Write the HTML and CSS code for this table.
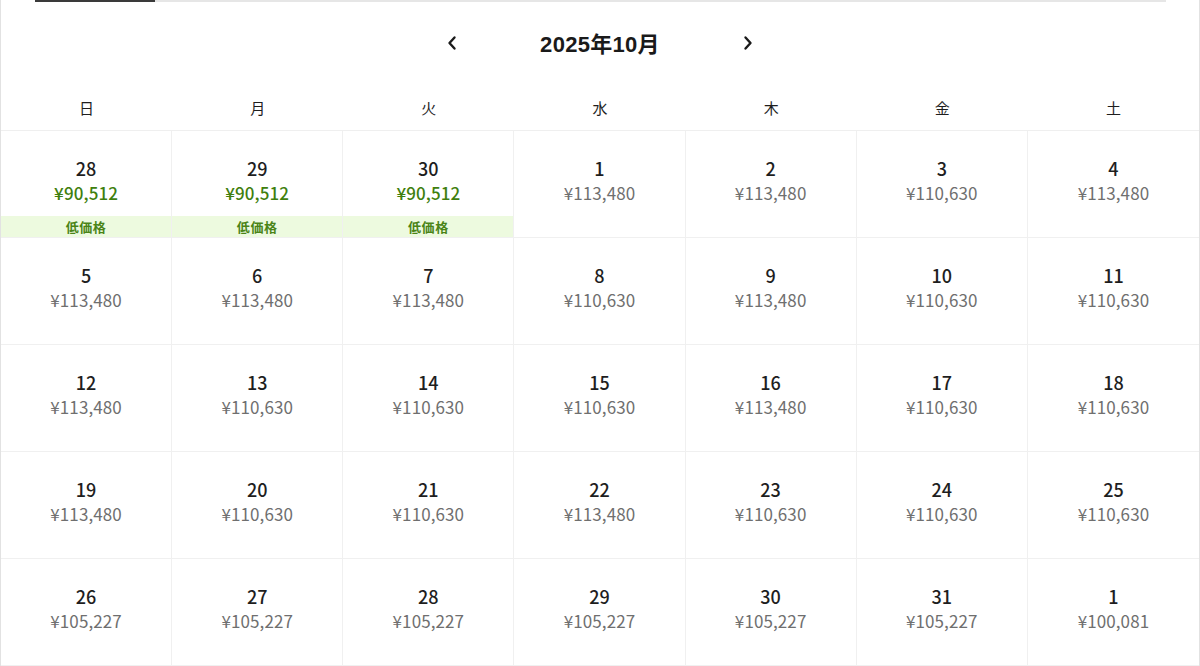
FILE: index.html
```html
<!DOCTYPE html>
<html lang="ja">
<head>
<meta charset="utf-8">
<link rel="stylesheet" href="styles.css">
</head>
<body>
<div class="frame">
  <div class="tabs"><div class="tab-active"></div></div>
  <div class="nav">
    <button class="arrow" aria-label="prev"><svg width="12" height="16" viewBox="0 0 12 16"><path d="M8.5 2.5 L3.5 8 L8.5 13.5" fill="none" stroke="#1a1a1a" stroke-width="2.4" stroke-linecap="round" stroke-linejoin="round"/></svg></button>
    <div class="title">2025年10月</div>
    <button class="arrow" aria-label="next"><svg width="12" height="16" viewBox="0 0 12 16"><path d="M3.5 2.5 L8.5 8 L3.5 13.5" fill="none" stroke="#1a1a1a" stroke-width="2.4" stroke-linecap="round" stroke-linejoin="round"/></svg></button>
  </div>
  <div class="weekdays">
    <div>日</div><div>月</div><div>火</div><div>水</div><div>木</div><div>金</div><div>土</div>
  </div>
  <div class="grid">
    <div class="cell low"><div class="day">28</div><div class="price">¥90,512</div><div class="badge">低価格</div></div>
    <div class="cell low"><div class="day">29</div><div class="price">¥90,512</div><div class="badge">低価格</div></div>
    <div class="cell low"><div class="day">30</div><div class="price">¥90,512</div><div class="badge">低価格</div></div>
    <div class="cell"><div class="day">1</div><div class="price">¥113,480</div></div>
    <div class="cell"><div class="day">2</div><div class="price">¥113,480</div></div>
    <div class="cell"><div class="day">3</div><div class="price">¥110,630</div></div>
    <div class="cell"><div class="day">4</div><div class="price">¥113,480</div></div>

    <div class="cell"><div class="day">5</div><div class="price">¥113,480</div></div>
    <div class="cell"><div class="day">6</div><div class="price">¥113,480</div></div>
    <div class="cell"><div class="day">7</div><div class="price">¥113,480</div></div>
    <div class="cell"><div class="day">8</div><div class="price">¥110,630</div></div>
    <div class="cell"><div class="day">9</div><div class="price">¥113,480</div></div>
    <div class="cell"><div class="day">10</div><div class="price">¥110,630</div></div>
    <div class="cell"><div class="day">11</div><div class="price">¥110,630</div></div>

    <div class="cell"><div class="day">12</div><div class="price">¥113,480</div></div>
    <div class="cell"><div class="day">13</div><div class="price">¥110,630</div></div>
    <div class="cell"><div class="day">14</div><div class="price">¥110,630</div></div>
    <div class="cell"><div class="day">15</div><div class="price">¥110,630</div></div>
    <div class="cell"><div class="day">16</div><div class="price">¥113,480</div></div>
    <div class="cell"><div class="day">17</div><div class="price">¥110,630</div></div>
    <div class="cell"><div class="day">18</div><div class="price">¥110,630</div></div>

    <div class="cell"><div class="day">19</div><div class="price">¥113,480</div></div>
    <div class="cell"><div class="day">20</div><div class="price">¥110,630</div></div>
    <div class="cell"><div class="day">21</div><div class="price">¥110,630</div></div>
    <div class="cell"><div class="day">22</div><div class="price">¥113,480</div></div>
    <div class="cell"><div class="day">23</div><div class="price">¥110,630</div></div>
    <div class="cell"><div class="day">24</div><div class="price">¥110,630</div></div>
    <div class="cell"><div class="day">25</div><div class="price">¥110,630</div></div>

    <div class="cell"><div class="day">26</div><div class="price">¥105,227</div></div>
    <div class="cell"><div class="day">27</div><div class="price">¥105,227</div></div>
    <div class="cell"><div class="day">28</div><div class="price">¥105,227</div></div>
    <div class="cell"><div class="day">29</div><div class="price">¥105,227</div></div>
    <div class="cell"><div class="day">30</div><div class="price">¥105,227</div></div>
    <div class="cell"><div class="day">31</div><div class="price">¥105,227</div></div>
    <div class="cell"><div class="day">1</div><div class="price">¥100,081</div></div>
  </div>
</div>
</body>
</html>
```

FILE: styles.css
```css
* { box-sizing: border-box; }
html, body { margin: 0; padding: 0; background: #fff; }
body {
  font-family: "Noto Sans CJK JP", "Noto Sans", sans-serif;
  color: #222;
}
.frame {
  width: 1200px;
  height: 666px;
  border-left: 1px solid #e2e2e2;
  border-right: 1px solid #e2e2e2;
  overflow: hidden;
}
.tabs {
  margin: 0 33px 0 34px;
  height: 2px;
  background: #e6e6e6;
}
.tab-active {
  width: 120px;
  height: 2px;
  background: #3a3a3a;
}
.nav {
  height: 84px;
  display: flex;
  align-items: center;
  justify-content: center;
}
.arrow {
  border: 0;
  background: none;
  padding: 0;
  width: 16px;
  height: 20px;
  display: flex;
  align-items: center;
  justify-content: center;
  margin-top: -3px;
}
.title {
  width: 280px;
  text-align: center;
  font-family: "Liberation Sans", "Noto Sans CJK JP", sans-serif;
  font-weight: 700;
  font-size: 22px;
  line-height: 28px;
  color: #1a1a1a;
  letter-spacing: 0.3px;
  margin-top: 2px;
}
.weekdays {
  display: grid;
  grid-template-columns: repeat(7, 1fr);
  height: 45px;
  border-bottom: 1px solid #efefef;
  align-items: center;
  font-size: 15px;
  color: #1e1e1e;
  text-align: center;
  padding-bottom: 2px;
}
.grid {
  display: grid;
  grid-template-columns: repeat(7, 1fr);
  grid-auto-rows: 107px;
}
.cell {
  display: flex;
  flex-direction: column;
  align-items: stretch;
  text-align: center;
  padding-top: 25px;
  border-right: 1px solid #f0f0f0;
  border-bottom: 1px solid #f0f0f0;
}
.cell:nth-child(7n) { border-right: 0; }
.day {
  font-size: 18px;
  line-height: 24px;
  color: #1e1e1e;
  font-weight: 500;
}
.price {
  font-size: 17px;
  line-height: 26px;
  color: #6f6f6f;
  letter-spacing: 0.1px;
}
.low .price {
  color: #3f7f0e;
  font-weight: 500;
}
.badge {
  margin-top: auto;
  height: 21px;
  line-height: 21px;
  background: #edfadf;
  color: #4a8417;
  font-size: 13px;
  font-weight: 700;
  letter-spacing: 0.6px;
}
```
